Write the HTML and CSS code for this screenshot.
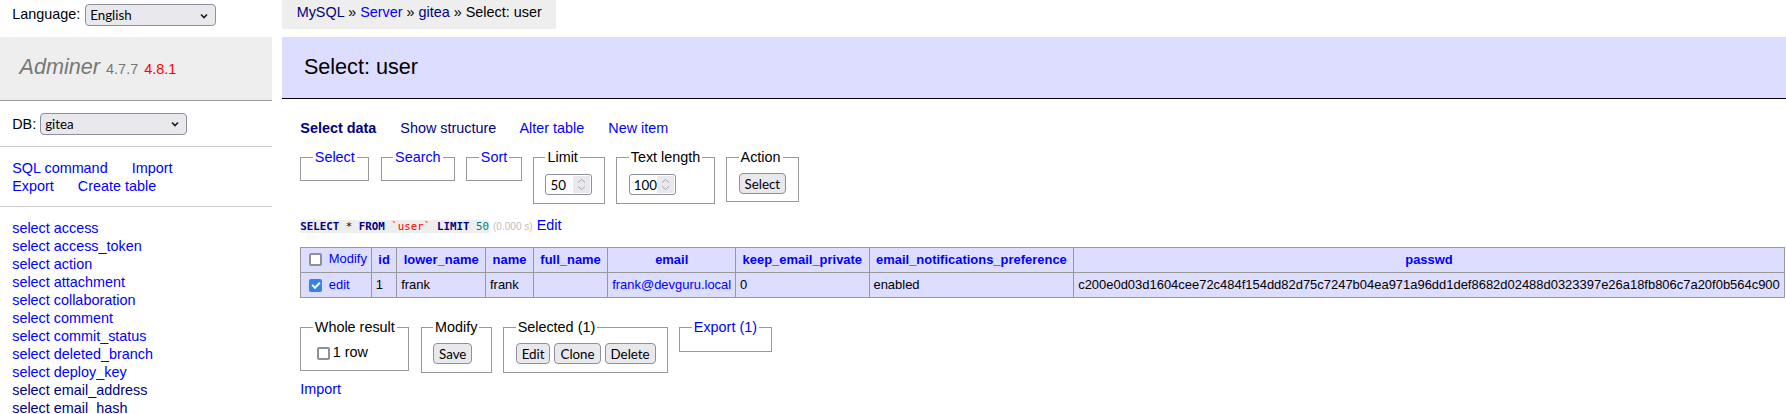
FILE: index.html
```html
<!DOCTYPE html>
<html lang="en">
<head>
<meta charset="utf-8">
<title>Select: user - gitea - Adminer</title>
<link rel="stylesheet" href="styles.css">
</head>
<body>
<div class="page">
  <aside class="side">
    <form class="lang">Language: <span class="sel sel-lang"><select><option>English</option><option>Deutsch</option><option>Français</option></select><svg class="chev" width="8" height="6" viewBox="0 0 8 6"><path d="M1 1.5 L4 4.5 L7 1.5" fill="none" stroke="#1b1b1b" stroke-width="1.6"/></svg></span></form>
    <div class="menu">
      <h1><a class="brand" href="#">Adminer</a> <span class="version">4.7.7</span> <a class="newver" href="#">4.8.1</a></h1>
      <p class="dbs"><span>DB:</span><span class="sel sel-db"><select><option>gitea</option></select><svg class="chev" width="8" height="6" viewBox="0 0 8 6"><path d="M1 1.5 L4 4.5 L7 1.5" fill="none" stroke="#1b1b1b" stroke-width="1.6"/></svg></span></p>
      <p class="side-links"><a href="#">SQL command</a> <a href="#">Import</a> <a href="#">Export</a> <a href="#">Create table</a></p>
      <ul class="tables">
        <li><a href="#">select</a> <a href="#">access</a></li>
        <li><a href="#">select</a> <a href="#">access_token</a></li>
        <li><a href="#">select</a> <a href="#">action</a></li>
        <li><a href="#">select</a> <a href="#">attachment</a></li>
        <li><a href="#">select</a> <a href="#">collaboration</a></li>
        <li><a href="#">select</a> <a href="#">comment</a></li>
        <li><a href="#">select</a> <a href="#">commit_status</a></li>
        <li><a href="#">select</a> <a href="#">deleted_branch</a></li>
        <li><a href="#">select</a> <a href="#">deploy_key</a></li>
        <li><a class="v" href="#">select</a> <a class="v" href="#">email_address</a></li>
        <li><a class="v" href="#">select</a> <a class="v" href="#">email_hash</a></li>
      </ul>
    </div>
  </aside>
  <main class="main">
    <p class="crumb"><a class="v" href="#">MySQL</a> » <a href="#">Server</a> » <a class="v" href="#">gitea</a> » Select: user</p>
    <h2 class="title">Select: user</h2>
    <div class="content">
      <p class="top-links"><a class="v active" href="#">Select data</a> <a class="v" href="#">Show structure</a> <a href="#">Alter table</a> <a href="#">New item</a></p>
      <form class="filters">
        <fieldset class="fs"><legend><a href="#">Select</a></legend></fieldset>
        <fieldset class="fs"><legend><a href="#">Search</a></legend></fieldset>
        <fieldset class="fs"><legend><a href="#">Sort</a></legend></fieldset>
        <fieldset class="fs"><legend>Limit</legend><span class="num"><input class="num-in" value="50"><span class="spin"><svg width="17" height="17" viewBox="0 0 17 17"><path d="M5 6.5 L8.5 3.5 L12 6.5 M5 10.5 L8.5 13.5 L12 10.5" fill="none" stroke="#a5a5ae" stroke-width="1"/></svg></span></span></fieldset>
        <fieldset class="fs"><legend>Text length</legend><span class="num"><input class="num-in" value="100"><span class="spin"><svg width="17" height="17" viewBox="0 0 17 17"><path d="M5 6.5 L8.5 3.5 L12 6.5 M5 10.5 L8.5 13.5 L12 10.5" fill="none" stroke="#a5a5ae" stroke-width="1"/></svg></span></span></fieldset>
        <fieldset class="fs"><legend>Action</legend><button type="button" class="btn">Select</button></fieldset>
      </form>
      <p class="query"><code class="sql"><b>SELECT</b> * <b>FROM</b> <span class="bac">`user`</span> <b>LIMIT</b> <span class="num-lit">50</span></code> <span class="time">(0.000 s)</span> <a href="#">Edit</a></p>
      <table class="grid">
        <thead>
          <tr>
            <td><input type="checkbox" class="cb"> <a href="#">Modify</a></td>
            <th><a href="#">id</a></th>
            <th><a href="#">lower_name</a></th>
            <th><a href="#">name</a></th>
            <th><a href="#">full_name</a></th>
            <th><a href="#">email</a></th>
            <th><a href="#">keep_email_private</a></th>
            <th><a href="#">email_notifications_preference</a></th>
            <th><a href="#">passwd</a></th>
          </tr>
        </thead>
        <tbody>
          <tr class="checked">
            <td><input type="checkbox" class="cb" checked> <a href="#">edit</a></td>
            <td>1</td>
            <td>frank</td>
            <td>frank</td>
            <td></td>
            <td><a href="#">frank@devguru.local</a></td>
            <td>0</td>
            <td>enabled</td>
            <td>c200e0d03d1604cee72c484f154dd82d75c7247b04ea971a96dd1def8682d02488d0323397e26a18fb806c7a20f0b564c900</td>
          </tr>
        </tbody>
      </table>
      <div class="footer">
        <fieldset class="fs"><legend>Whole result</legend><label><input type="checkbox" class="cb">1 row</label></fieldset>
        <fieldset class="fs"><legend>Modify</legend><button type="button" class="btn">Save</button></fieldset>
        <fieldset class="fs"><legend>Selected (1)</legend><button type="button" class="btn">Edit</button> <button type="button" class="btn">Clone</button> <button type="button" class="btn">Delete</button></fieldset>
        <fieldset class="fs"><legend><a href="#">Export (1)</a></legend></fieldset>
      </div>
      <div class="import"><a href="#">Import</a></div>
    </div>
  </main>
</div>
</body>
</html>
```

FILE: styles.css
```css
html {
  overflow: hidden;
}

body {
  margin: 0;
  color: #000;
  background: #fff;
  font: 14.4px/1.25 "Liberation Sans", Arial, sans-serif;
}

a {
  color: #00f;
  text-decoration: none;
}

a.v {
  color: #000080;
}

.page {
  display: flex;
  align-items: flex-start;
}

/* ---------- sidebar ---------- */
.side {
  width: 272px;
  flex: none;
}

.lang {
  margin: 0;
  padding: 2.2px 12.2px 4.3px;
  line-height: 25.92px;
  white-space: nowrap;
}

.menu {
  margin-top: 4.6px;
}

.menu h1 {
  margin: 0;
  padding: 17.28px 19.6px;
  font-size: 21.6px;
  line-height: 25.5px;
  font-weight: normal;
  color: #777;
  background: #eee;
  border-bottom: 1px solid #999;
  white-space: nowrap;
}

.brand {
  color: #777;
  font-style: italic;
}

.version {
  color: #777;
  font-size: 14.47px;
}

.newver {
  color: red;
  font-size: 14.47px;
}

.dbs,
.side-links,
.tables {
  margin: 0;
  padding: 11.52px 12.2px;
  border-bottom: 1px solid #ccc;
}

.dbs {
  display: flex;
  align-items: center;
  gap: 4px;
  white-space: nowrap;
}

.side-links {
  padding-right: 18px;
}

.side-links a {
  white-space: nowrap;
  margin-right: 20px;
}

.tables {
  list-style: none;
  white-space: nowrap;
  overflow: hidden;
}

/* ---------- Firefox-like controls ---------- */
.sel {
  display: inline-flex;
  align-items: center;
  vertical-align: middle;
  height: 22px;
  box-sizing: border-box;
  border: 1px solid #8f8f9d;
  border-radius: 4px;
  background: #e9e9ed;
}

.sel select {
  appearance: none;
  -webkit-appearance: none;
  flex: 1;
  min-width: 0;
  height: 100%;
  border: 0;
  margin: 0;
  padding: 0 0 0 4px;
  background: transparent;
  color: #000;
  font: 13.33px Lato, "Liberation Sans", sans-serif;
  outline: none;
}

.sel .chev {
  flex: none;
  margin: 1px 7px 0 4px;
}

.sel-lang {
  width: 131px;
  margin-left: 1px;
}

.sel-db {
  width: 147px;
}

.num {
  display: inline-flex;
  vertical-align: middle;
  width: 47px;
  height: 21px;
  margin: 1px 0;
  box-sizing: border-box;
  border: 1px solid #8f8f9d;
  border-radius: 3px;
  background: #fff;
  padding: 1px;
}

.num-in {
  flex: 1;
  min-width: 0;
  width: 10px;
  border: 0;
  margin: 0;
  padding: 0 0 0 3px;
  background: transparent;
  font: 13.33px Lato, "Liberation Sans", sans-serif;
  color: #000;
  outline: none;
}

.spin {
  flex: none;
  width: 17px;
  display: flex;
  align-items: center;
  justify-content: center;
  background: #e9e9ed;
}

.btn {
  height: 21px;
  box-sizing: border-box;
  margin: 0;
  padding: 0 5px;
  vertical-align: middle;
  border: 1px solid #8f8f9d;
  border-radius: 4px;
  background: #e9e9ed;
  color: #000;
  font: 13.33px Lato, "Liberation Sans", sans-serif;
}

.cb {
  appearance: none;
  -webkit-appearance: none;
  display: inline-grid;
  place-content: center;
  width: 13px;
  height: 13px;
  box-sizing: border-box;
  margin: 3px 3px 3px 4px;
  border: 2px solid #8f8f9d;
  border-radius: 2px;
  background: #fff;
  vertical-align: middle;
}

.cb:checked {
  background: #3584e4;
  border-color: #3584e4;
}

.cb:checked::before {
  content: "";
  width: 6px;
  height: 3px;
  border-left: 2px solid #fff;
  border-bottom: 2px solid #fff;
  transform: translate(0, -1px) rotate(-45deg);
}

/* ---------- main ---------- */
.main {
  flex: 1;
  min-width: 0;
  margin-left: 10.3px;
}

.crumb {
  margin: 0;
  width: fit-content;
  height: 28.8px;
  box-sizing: border-box;
  padding: 0 14.4px;
  line-height: 25.92px;
  background: #eee;
  white-space: nowrap;
}

.title {
  margin: 8.2px 0 20px;
  padding: 17.28px 21.6px;
  font-size: 21.6px;
  line-height: 26px;
  font-weight: normal;
  color: #000;
  background: #ddf;
  border-bottom: 1px solid #000;
}

.content {
  padding-left: 18px;
}

.top-links {
  margin: 0;
  white-space: nowrap;
}

.top-links a {
  margin-right: 20px;
}

.top-links .active {
  font-weight: bold;
}

.filters,
.footer {
  display: flex;
  align-items: flex-start;
  gap: 11.2px;
  margin: 0;
}

.filters {
  margin-top: 11.52px;
}

.fs {
  margin: 0;
  padding: 7.2px 11.52px;
  border: 1px solid #999;
  white-space: nowrap;
}

.fs legend {
  padding: 0 2px;
  line-height: 18px;
}

.query {
  margin: 11.52px 20px 0 0;
  white-space: nowrap;
}

.sql {
  font-family: "DejaVu Sans Mono", monospace;
  font-size: 10.8px;
  background: #eee;
}

.sql b {
  color: #000080;
}

.bac {
  color: red;
}

.num-lit {
  color: #007f7f;
}

.time {
  color: silver;
  font-size: 10.08px;
}

.grid {
  margin: 12.96px 0 0;
  border-collapse: collapse;
  font-size: 12.96px;
  white-space: pre;
}

.grid td,
.grid th {
  border: 1px solid #999;
  padding: 2.6px 3.9px;
}

.grid thead th {
  padding: 2.6px 6.48px;
  text-align: center;
}

.grid thead td,
.grid thead th,
.grid .checked td {
  background: #ddf;
}

.footer {
  margin-top: 20px;
  padding-bottom: 7.2px;
}

.footer label {
  white-space: nowrap;
}
```
